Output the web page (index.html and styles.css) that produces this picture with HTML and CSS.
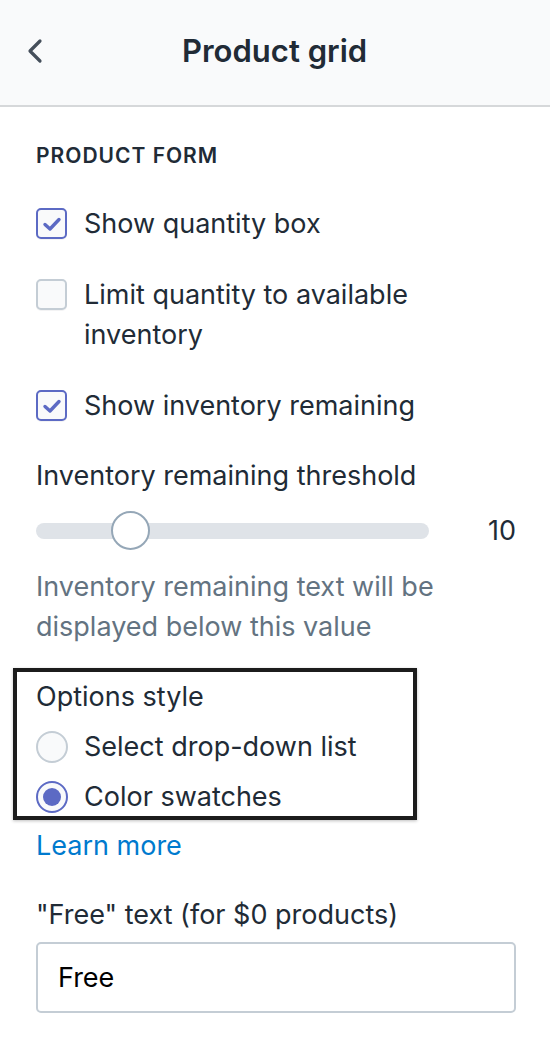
FILE: index.html
```html
<!DOCTYPE html>
<html>
<head>
<meta charset="utf-8">
<link rel="stylesheet" href="styles.css">
</head>
<body>
<header class="topbar">
  <button class="back" aria-label="Back">
    <svg width="18" height="26" viewBox="0 0 18 26"><path d="M14 3 L4 13 L14 23" fill="none" stroke="#454f5b" stroke-width="3.2" stroke-linecap="round" stroke-linejoin="round"/></svg>
  </button>
  <h1 class="title">Product grid</h1>
</header>
<main class="content">
  <h2 class="section-title">PRODUCT FORM</h2>

  <label class="check-row">
    <span class="checkbox checked"><svg width="20" height="16" viewBox="0 0 20 16"><path d="M3 8.5 L8 13 L17 3.5" fill="none" stroke="#5c6ac4" stroke-width="3.4" stroke-linecap="round" stroke-linejoin="round"/></svg></span>
    <span class="check-label">Show quantity box</span>
  </label>
  <label class="check-row">
    <span class="checkbox"></span>
    <span class="check-label">Limit quantity to available inventory</span>
  </label>
  <label class="check-row">
    <span class="checkbox checked"><svg width="20" height="16" viewBox="0 0 20 16"><path d="M3 8.5 L8 13 L17 3.5" fill="none" stroke="#5c6ac4" stroke-width="3.4" stroke-linecap="round" stroke-linejoin="round"/></svg></span>
    <span class="check-label">Show inventory remaining</span>
  </label>

  <div class="field-label">Inventory remaining threshold</div>
  <div class="slider-row">
    <div class="track"><span class="thumb"></span></div>
    <span class="slider-value">10</span>
  </div>
  <p class="help">Inventory remaining text will be displayed below this value</p>

  <div class="options-box">
    <div class="options-label">Options style</div>
    <label class="radio-row"><span class="radio"></span><span>Select drop-down list</span></label>
    <label class="radio-row"><span class="radio on"></span><span>Color swatches</span></label>
  </div>
  <a class="learn" href="#">Learn more</a>

  <div class="free-label">"Free" text (for $0 products)</div>
  <div class="input">Free</div>
</main>
</body>
</html>
```

FILE: styles.css
```css
* { box-sizing: border-box; }
html, body { margin: 0; padding: 0; background: #fff; }
body {
  font-family: Inter, "Open Sans", "Liberation Sans", sans-serif;
  color: #212b36;
  font-size: 27px;
  line-height: 40px;
  width: 550px;
}
.topbar {
  height: 107px;
  background: #f9fafb;
  border-bottom: 2px solid #d6d8da;
  display: flex;
  align-items: center;
  position: relative;
  padding-bottom: 4px;
}
.back {
  background: none;
  border: 0;
  padding: 0;
  margin-left: 26px;
  width: 18px;
  height: 26px;
  display: flex;
}
.title {
  margin: 0 0 0 138px;
  font-size: 31px;
  font-weight: 600;
  line-height: 40px;
  color: #212b36;
}
.content {
  padding: 37px 34px 0 36px;
  display: flex;
  flex-direction: column;
}
.section-title {
  margin: 0;
  font-size: 21px;
  font-weight: 600;
  line-height: 24px;
  letter-spacing: 1px;
}
.check-row {
  display: flex;
  align-items: flex-start;
  gap: 17px;
  margin-top: 31px;
}
.check-row:first-of-type { margin-top: 36px; }
.checkbox {
  flex: none;
  width: 31px;
  height: 31px;
  margin-top: 4px;
  border: 2px solid #c4cdd5;
  border-radius: 5px;
  background: #f9fafb;
  box-shadow: 0 1px 0 rgba(22,29,37,0.05);
  display: flex;
  align-items: center;
  justify-content: center;
}
.checkbox.checked { border-color: #5c6ac4; }
.check-label { max-width: 380px; }
.field-label { margin-top: 30px; }
.slider-row {
  margin-top: 15px;
  height: 40px;
  display: flex;
  align-items: center;
  justify-content: space-between;
}
.track {
  position: relative;
  width: 393px;
  height: 16px;
  border-radius: 8px;
  background: #dfe3e8;
}
.thumb {
  position: absolute;
  left: 75px;
  top: -12px;
  width: 39px;
  height: 39px;
  border-radius: 50%;
  background: #fff;
  border: 2px solid #95a7b7;
}
.slider-value { line-height: 40px; }
.help {
  margin: 16px 0 0;
  color: #637381;
  max-width: 420px;
}
.options-box {
  margin: 21px 0 0 -23px;
  width: 404px;
  border: 4px solid #1c1c1c;
  box-shadow: 0 1px 3px rgba(0,0,0,0.25);
  padding: 7px 0 1px 19px;
}
.options-label { line-height: 36px; }
.radio-row {
  display: flex;
  align-items: center;
  gap: 16px;
  height: 36px;
  margin-top: 14px;
}
.radio {
  flex: none;
  width: 32px;
  height: 32px;
  border-radius: 50%;
  border: 2px solid #c4cdd5;
  background: #f9fafb;
  position: relative;
}
.radio.on { border-color: #5c6ac4; }
.radio.on::after {
  content: "";
  position: absolute;
  left: 5px;
  top: 5px;
  width: 18px;
  height: 18px;
  border-radius: 50%;
  background: #5c6ac4;
}
.learn {
  margin-top: 6px;
  color: #007ace;
  text-decoration: none;
  align-self: flex-start;
}
.free-label { margin-top: 29px; }
.input {
  margin-top: 7px;
  height: 71px;
  border: 2px solid #c4cdd5;
  border-radius: 5px;
  padding: 0 20px;
  display: flex;
  align-items: center;
  color: #000;
}
```
